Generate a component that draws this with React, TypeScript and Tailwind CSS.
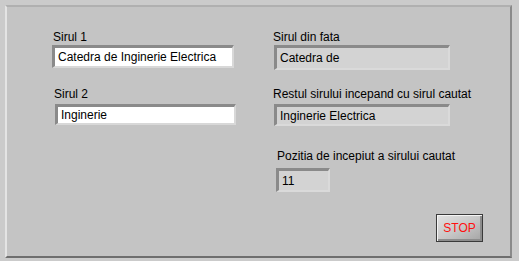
import React from 'react';

const font = { fontFamily: '"Liberation Sans", Arial, sans-serif' };

function Control({ value, className }: { value: string; className: string }) {
  return (
    <div
      className={`border-t-[3px] border-l-[3px] border-b-2 border-r-2 border-t-[#8a8a8a] border-l-[#8a8a8a] border-b-[#d8d8d8] border-r-[#d8d8d8] bg-white flex items-center pl-[3px] text-[12px] text-black ${className}`}
    >
      {value}
    </div>
  );
}

function Indicator({ value, className }: { value: string; className: string }) {
  return (
    <div
      className={`border-t-[3px] border-l-[3px] border-b-2 border-r-2 border-t-[#8a8a8a] border-l-[#8a8a8a] border-b-[#dadada] border-r-[#dadada] bg-[#d3d3d3] flex items-center pl-[3px] text-[12px] text-black ${className}`}
    >
      {value}
    </div>
  );
}

export default function App() {
  return (
    <div className="w-[519px] h-[261px] bg-[#cbcbcb] pt-[5px] pl-[5px] pr-[7px] pb-[3px]" style={font}>
      <div className="w-full h-full bg-[#c4c4c4] border-t-2 border-l-2 border-t-[#b0b0b0] border-l-[#e4e4e4] border-b-2 border-r-2 border-b-[#6e6e6e] border-r-[#8a8a8a] flex">
        {/* Left column: controls */}
        <div className="flex flex-col pl-[45px] pt-[23px] w-[230px]">
          <div className="text-[12px] leading-[15px] text-black pl-[1px]">Sirul 1</div>
          <Control value="Catedra de Inginerie Electrica" className="mt-0 w-[182px] h-[23px]" />
          <div className="text-[12px] leading-[15px] text-black pl-[2px] mt-[19px]">Sirul 2</div>
          <Control value="Inginerie" className="mt-[2px] ml-[3px] w-[181px] h-[21px]" />
        </div>
        {/* Right column: indicators */}
        <div className="flex flex-col pl-[36px] pt-[23px] flex-1">
          <div className="text-[12px] leading-[15px] text-black">Sirul din fata</div>
          <Indicator value="Catedra de" className="mt-0 ml-[1px] w-[176px] h-[25px]" />
          <div className="text-[12px] leading-[15px] text-black mt-[17px]">Restul sirului incepand cu sirul cautat</div>
          <Indicator value="Inginerie Electrica" className="mt-[2px] ml-[1px] w-[176px] h-[22px]" />
          <div className="text-[12px] leading-[15px] text-black mt-[23px] ml-[4px]">Pozitia de incepiut a sirului cautat</div>
          <Indicator value="11" className="mt-[4px] ml-[3px] w-[54px] h-[24px]" />
          <div className="flex justify-end pr-[27px] mt-[22px]">
            <button className="w-[47px] h-[28px] border border-[#3a3a3a] bg-gradient-to-br from-[#e2e2e2] via-[#c8c8c8] to-[#a4a4a4] shadow-[inset_1px_1px_0_#f4f4f4,inset_-2px_-2px_0_#8c8c8c] text-[#ff1010] text-[12px] flex items-center justify-center">
              STOP
            </button>
          </div>
        </div>
      </div>
    </div>
  );
}
